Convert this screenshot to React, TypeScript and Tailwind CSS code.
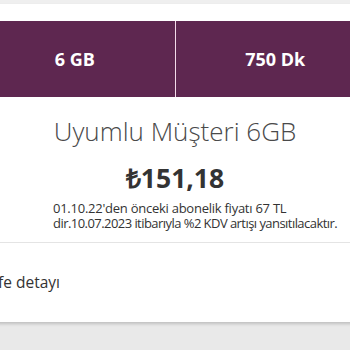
import React from "react";

export default function App() {
  return (
    <div className="w-[350px] h-[350px] overflow-hidden bg-[#e9e9e9] text-[#4a4a4a]" style={{ fontFamily: "'Open Sans', sans-serif" }}>
      {/* top gray strip */}
      <div className="h-[4px] bg-[#efefef]" />

      {/* card, wider than the viewport (scrolled view) */}
      <div className="w-[400px] -ml-[25px] bg-white h-[318px] shadow-[0_2px_3px_rgba(0,0,0,0.18)] flex flex-col">
        <div className="h-[17px] shrink-0" />

        {/* package bar */}
        <div className="flex h-[76px] shrink-0 bg-[#5e2750]">
          <div className="flex-1 flex items-center justify-center text-white font-bold text-[18px]">6 GB</div>
          <div className="w-[1px] bg-[#f3dbe9]" />
          <div className="flex-1 flex items-center justify-center text-white font-bold text-[18px]">750 Dk</div>
        </div>

        {/* title + price */}
        <div className="flex flex-col items-center pt-[19px]">
          <h1 className="text-[26px] font-light leading-[30px] text-[#4a4a4a] whitespace-nowrap">Uyumlu Müşteri 6GB</h1>
          <div className="mt-[15px] text-[26.5px] font-bold leading-[34px] text-[#333333]">₺151,18</div>
        </div>

        <div className="pl-[78px] mt-[6px] text-[13px] leading-[15px] text-[#333333] whitespace-nowrap">
          <p className="tracking-[-0.25px]">01.10.22'den önceki abonelik fiyatı 67 TL</p>
          <p className="tracking-[-0.55px]">dir.10.07.2023 itibarıyla %2 KDV artışı yansıtılacaktır.</p>
        </div>

        {/* divider */}
        <div className="mt-[11px] h-[1px] shrink-0 bg-[#e4e4e4]" />

        {/* detail row */}
        <div className="flex-1 flex items-center text-[15.5px] text-[#333333]">
          <span className="pl-[23px]">fe detayı</span>
        </div>
      </div>
    </div>
  );
}
